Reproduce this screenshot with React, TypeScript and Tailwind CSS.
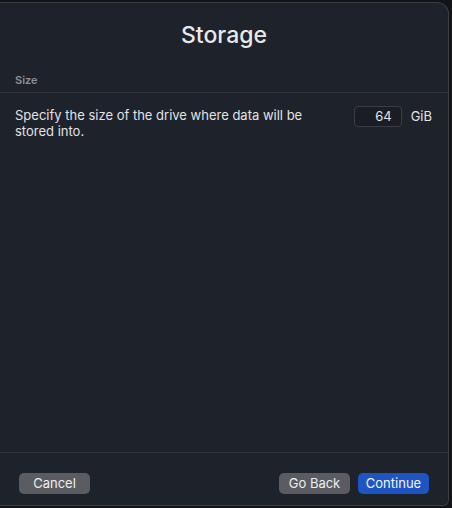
export default function App() {
  return (
    <div className="w-[452px] h-[508px] bg-[#131417] pt-[2px] pr-[3px] pb-[2px] font-['Inter',sans-serif]">
      <div className="h-full flex flex-col bg-[#1e222a] border-t border-r border-b border-[#3a3d43] rounded-tr-[12px] rounded-br-[6px]">
        <h1 className="text-center text-[23px] font-medium text-[#e8e8ea] pt-[17px] leading-[30px]">Storage</h1>

        <div className="px-[15px] pt-[23px] pb-[5px] text-[11px] font-semibold text-[#8c8f96] leading-[14px]">Size</div>
        <div className="h-px bg-[#30343b]" />

        <div className="flex items-start justify-between pl-[15px] pr-[16px] pt-[14px]">
          <p className="w-[295px] text-[13px] leading-[16px] text-[#e2e3e5]">
            Specify the size of the drive where data will be stored into.
          </p>
          <div className="flex items-center gap-[9px] mt-[-1px]">
            <div className="w-[48px] h-[21px] rounded-[4px] border border-[#383c43] bg-[#1a1d23] text-right pr-[9px] text-[13px] leading-[19px] text-[#e4e5e7]">
              64
            </div>
            <span className="text-[13px] text-[#e4e5e7]">GiB</span>
          </div>
        </div>

        <div className="flex-1" />
        <div className="h-px bg-[#30343b]" />

        <div className="flex items-center justify-between pl-[19px] pr-[19px] pt-[20px] pb-[11px]">
          <button className="w-[71px] h-[21px] rounded-[5px] bg-[#5a5c61] text-[13px] leading-[21px] text-[#eeeeef]">Cancel</button>
          <div className="flex gap-[8px]">
            <button className="w-[71px] h-[21px] rounded-[5px] bg-[#5a5c61] text-[13px] leading-[21px] text-[#eeeeef]">Go Back</button>
            <button className="w-[71px] h-[21px] rounded-[5px] bg-[#1f55c3] text-[13px] leading-[21px] text-[#f3f5fa]">Continue</button>
          </div>
        </div>
      </div>
    </div>
  );
}
